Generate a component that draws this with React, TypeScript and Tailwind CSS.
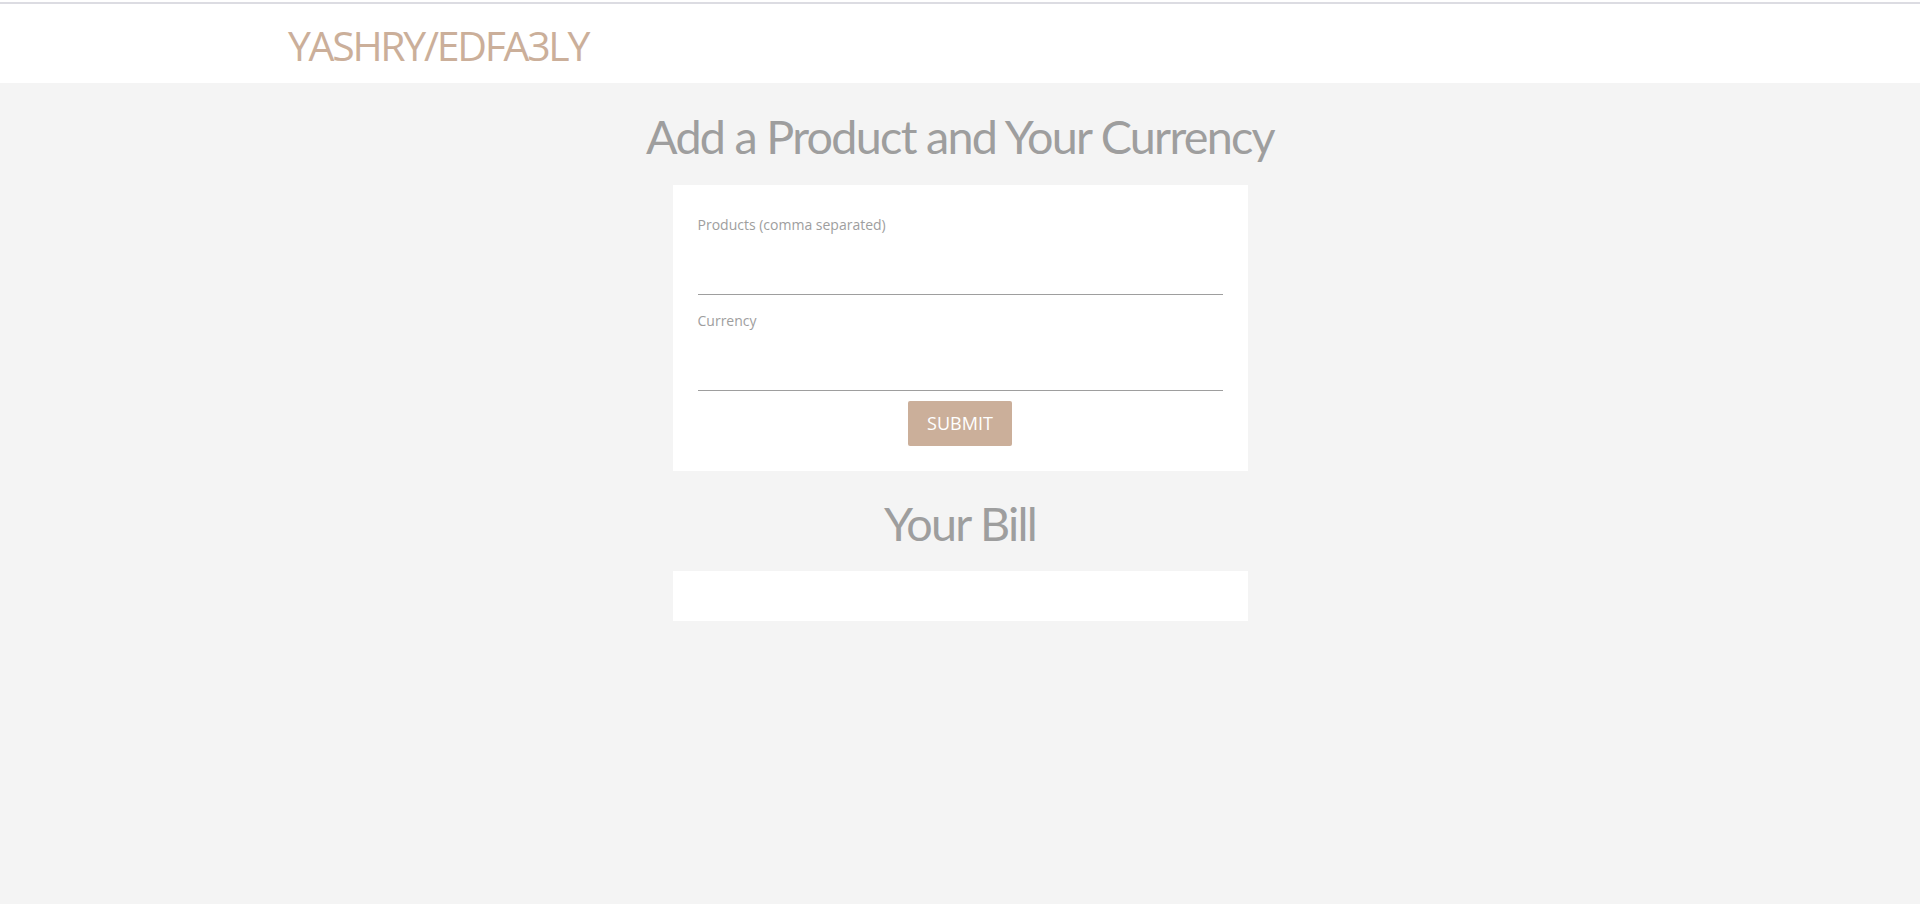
import React from "react";

const App = () => {
  return (
    <div className="min-h-screen bg-[#f4f4f4] font-['Open_Sans',sans-serif]">
      <header className="bg-white h-[83px] pt-[2px]">
        <div className="h-[2px] bg-[#dcdce2]" />
        <div className="w-[70%] mx-auto pt-[21px]">
          <a href="#" className="block leading-none text-[41px] tracking-[-2.3px] text-[#cbaf9a]">
            YASHRY/EDFA3LY
          </a>
        </div>
      </header>

      <main className="flex flex-col items-center">
        <h3 className="mt-[30px] leading-none font-['Lato',sans-serif] text-[46.7px] tracking-[-1.7px] text-[#9e9e9e]">
          Add a Product and Your Currency
        </h3>

        <form className="mt-[25px] w-[575px] bg-white px-[25px] pt-[33px] pb-[25px]">
          <label className="block leading-none text-[14px] text-[#9e9e9e]">
            Products (comma separated)
          </label>
          <input
            type="text"
            className="block w-full h-[63px] border-b border-[#9e9e9e] outline-none"
          />
          <label className="block mt-[19px] leading-none text-[14px] text-[#9e9e9e]">
            Currency
          </label>
          <input
            type="text"
            className="block w-full h-[63px] border-b border-[#9e9e9e] outline-none"
          />
          <div className="flex justify-center mt-[10px]">
            <button
              type="button"
              className="w-[104px] h-[45px] rounded-[2px] bg-[#cbaf9a] text-white text-[18px] leading-none"
            >
              SUBMIT
            </button>
          </div>
        </form>

        <h3 className="mt-[29px] leading-none font-['Lato',sans-serif] text-[46.7px] tracking-[-1.7px] text-[#9e9e9e]">
          Your Bill
        </h3>
        <div className="mt-[25px] w-[575px] h-[50px] bg-white" />
      </main>
    </div>
  );
};

export default App;
